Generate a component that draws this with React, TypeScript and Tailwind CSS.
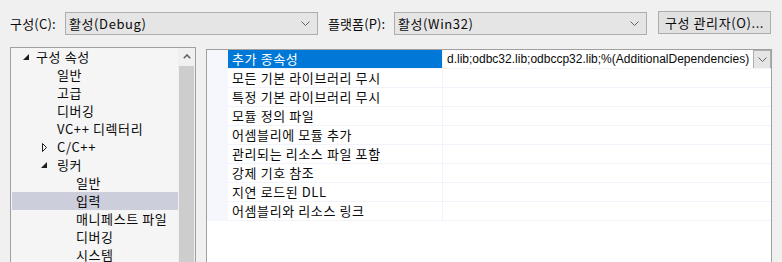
const font = "font-['Noto_Sans_CJK_KR','Noto_Sans',sans-serif]";

type TreeItem = {
  label: string;
  level: number;
  toggle?: "open" | "closed";
  selected?: boolean;
};

const treeItems: TreeItem[] = [
  { label: "구성 속성", level: 0, toggle: "open" },
  { label: "일반", level: 1 },
  { label: "고급", level: 1 },
  { label: "디버깅", level: 1 },
  { label: "VC++ 디렉터리", level: 1 },
  { label: "C/C++", level: 1, toggle: "closed" },
  { label: "링커", level: 1, toggle: "open" },
  { label: "일반", level: 2 },
  { label: "입력", level: 2, selected: true },
  { label: "매니페스트 파일", level: 2 },
  { label: "디버깅", level: 2 },
  { label: "시스템", level: 2 },
];

const gridRows = [
  "추가 종속성",
  "모든 기본 라이브러리 무시",
  "특정 기본 라이브러리 무시",
  "모듈 정의 파일",
  "어셈블리에 모듈 추가",
  "관리되는 리소스 파일 포함",
  "강제 기호 참조",
  "지연 로드된 DLL",
  "어셈블리와 리소스 링크",
];

function Chevron() {
  return (
    <svg width="9" height="5" viewBox="0 0 9 5" className="shrink-0">
      <polyline points="0.5,0.5 4.5,4.5 8.5,0.5" fill="none" stroke="#606060" strokeWidth="1" />
    </svg>
  );
}

function Combo({ value }: { value: string }) {
  return (
    <div className="mt-px flex h-[23px] w-[253px] shrink-0 items-center justify-between border border-[#adadad] bg-[#e5e5e5] pl-[3px] pr-[7px]">
      <span>{value}</span>
      <Chevron />
    </div>
  );
}

function Toggle({ kind }: { kind: "open" | "closed" }) {
  if (kind === "open") {
    return (
      <svg width="6" height="6" viewBox="0 0 6 6">
        <polygon points="6,0 6,6 0,6" fill="#1e1e1e" />
      </svg>
    );
  }
  return (
    <svg width="5" height="9" viewBox="0 0 5 9">
      <polygon points="0.5,0.5 4.5,4.5 0.5,8.5" fill="none" stroke="#1e1e1e" strokeWidth="1" />
    </svg>
  );
}

export default function App() {
  return (
    <div className={`h-[262px] w-[782px] overflow-hidden bg-[#f0f0f0] ${font} text-[13px] tracking-[0.6px] text-[#0a0a0a]`}>
      <div className="flex items-start pl-[10px] pt-[11px]">
        <div className="flex h-[25px] w-[55px] shrink-0 items-center tracking-[0.2px]">구성(C):</div>
        <Combo value="활성(Debug)" />
        <div className="ml-[10px] flex h-[25px] w-[66px] shrink-0 items-center whitespace-nowrap tracking-[0.1px]">
          플랫폼(P):
        </div>
        <Combo value="활성(Win32)" />
        <button
          type="button"
          className="ml-[11px] flex h-[23px] w-[113px] shrink-0 items-center justify-center border border-[#adadad] bg-[#e1e1e1]"
        >
          구성 관리자(O)...
        </button>
      </div>

      <div className="mt-[11px] flex items-start pl-[10px]">
        <div className="flex h-[230px] w-[186px] shrink-0 border border-[#a0a0a0] bg-[#f5f5f5]">
          <div className="flex-1 pl-px">
            {treeItems.map((item, i) => (
              <div
                key={i}
                className={`flex h-[18px] items-center whitespace-nowrap ${item.selected ? "bg-[#cccedb]" : ""}`}
              >
                <span
                  className={`flex w-[10px] items-center justify-center ${
                    item.level === 0 ? "ml-[9px]" : item.level === 1 ? "ml-[27px]" : "ml-[46px]"
                  }`}
                >
                  {item.toggle ? <Toggle kind={item.toggle} /> : null}
                </span>
                <span className={item.level === 0 ? "ml-[5px]" : "ml-[8px]"}>{item.label}</span>
              </div>
            ))}
          </div>
          <div className="flex w-[17px] shrink-0 flex-col bg-[#f0f0f0]">
            <div className="flex h-[17px] items-center justify-center">
              <svg width="8" height="5" viewBox="0 0 8 5">
                <polyline points="0.8,4.2 4,1 7.2,4.2" fill="none" stroke="#606060" strokeWidth="1.6" />
              </svg>
            </div>
            <div className="mx-px mt-px flex-1 bg-[#cdcdcd]" />
          </div>
        </div>

        <div className="ml-[10px] mt-[2px] h-[230px] w-[566px] shrink-0 border border-[#a0a0a0] bg-white">
          <div className="flex">
            <div className="w-[21px] shrink-0 bg-[#f5f7fc]" />
            <div className="min-w-0 flex-1">
              {gridRows.map((name, i) => (
                <div key={name} className="flex h-[19px] border-b border-[#f0f3f9]">
                  <div
                    className={`flex w-[215px] shrink-0 items-center whitespace-nowrap border-r border-[#f0f3f9] pl-[4px] ${
                      i === 0 ? "bg-[#0078d7] text-white" : ""
                    }`}
                  >
                    {name}
                  </div>
                  {i === 0 ? (
                    <div className="flex min-w-0 flex-1 items-center justify-between overflow-hidden pl-[4px]">
                      <span className="whitespace-nowrap font-['Liberation_Sans','Noto_Sans_CJK_KR',sans-serif] text-[12px] tracking-normal">
                        d.lib;odbc32.lib;odbccp32.lib;%(AdditionalDependencies)
                      </span>
                      <div className="flex h-[19px] w-[18px] shrink-0 items-center justify-center border border-[#adadad] bg-[#e5e5e5]">
                        <Chevron />
                      </div>
                    </div>
                  ) : (
                    <div className="flex-1" />
                  )}
                </div>
              ))}
            </div>
          </div>
        </div>
      </div>
    </div>
  );
}
